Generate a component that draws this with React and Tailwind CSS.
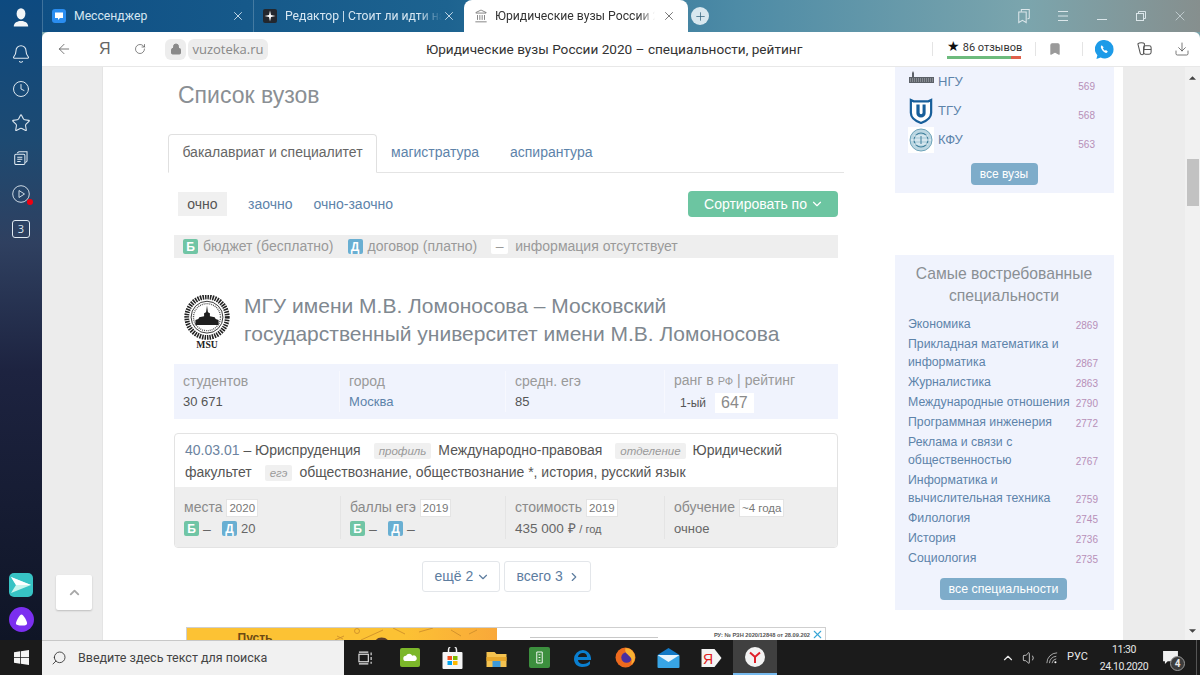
import React from "react";
import { ArrowLeft, Bell, Bookmark, ChevronDown, ChevronRight, ChevronUp, Clock, Download, Landmark, Lock, Plus, RotateCw, Search, Star, Volume1, X } from "lucide-react";

function Tab({ icon, title, fade }) {
  return (
    <div className="w-[211px] h-[32px] flex items-center shrink-0 border-l border-white/20 pl-[9px] pr-[8px] text-[#d5e6f2]">
      <div className="w-[14px] h-[14px] shrink-0 flex items-center justify-center">{icon}</div>
      <div className={"ml-[8px] w-[158px] text-[12.2px] whitespace-nowrap overflow-hidden " + (fade ? "[mask-image:linear-gradient(to_right,black_85%,transparent)]" : "")}>{title}</div>
      <X size={14} className="ml-auto shrink-0 text-[#d5e6f2]" strokeWidth={1.5} />
    </div>
  );
}

function Year({ children }) {
  return <span className="bg-white border border-[#e4e4e4] text-[#777] text-[11.5px] leading-[16px] px-[2px] ml-[4px] inline-block">{children}</span>;
}

function Tag({ children }) {
  return <span className="bg-[#f0f0f0] text-[#9a9a9a] italic text-[11.5px] leading-[14px] px-[5px] py-[2px] ml-[13px] mr-[7px] rounded-[2px]">{children}</span>;
}

function Badge({ color, children }) {
  return <span className={"inline-flex w-[15px] h-[15px] items-center justify-center rounded-[2px] text-white text-[12px] font-bold " + color}>{children}</span>;
}

function StatCell({ label, value, link, className }) {
  return (
    <div className={"pl-[9px] " + className}>
      <div className="text-[14px] leading-[20px] text-[#9a9a9a]">{label}</div>
      <div className={"mt-[1px] text-[13px] leading-[20px] " + (link ? "text-[#5d83aa]" : "text-[#555]")}>{value}</div>
    </div>
  );
}

const topUnis = [
  { name: "НГУ", score: 569, logo: <NguLogo /> },
  { name: "ТГУ", score: 568, logo: <TguLogo /> },
  { name: "КФУ", score: 563, logo: <KfuLogo /> },
];

const specialties = [
  ["Экономика", 2869],
  ["Прикладная математика и информатика", 2867],
  ["Журналистика", 2863],
  ["Международные отношения", 2790],
  ["Программная инженерия", 2772],
  ["Реклама и связи с общественностью", 2767],
  ["Информатика и вычислительная техника", 2759],
  ["Филология", 2745],
  ["История", 2736],
  ["Социология", 2735],
];

function NguLogo() {
  return (
    <svg viewBox="0 0 26 14" className="w-[26px] h-[14px] -mt-[8px]">
      <path d="M1 12V6h3V2l1-2 1 2v4h20v6z" fill="#5c6168" />
      <path d="M2 8h23M2 10h23" stroke="#d8dce2" strokeWidth="0.7" strokeDasharray="1 1" />
    </svg>
  );
}

function TguLogo() {
  return (
    <svg viewBox="0 0 26 28" className="w-[24px] h-[26px]">
      <path d="M2 2l3 1.5h16L24 2v14c0 6-5 9-11 11C7 25 2 22 2 16z" fill="#fff" stroke="#175e9a" strokeWidth="2.4" />
      <path d="M8 7h3.5v9a1.6 1.6 0 003.2 0V7H18v9.5c0 3-2.2 4.5-5 4.5s-5-1.5-5-4.5z" fill="#175e9a" />
    </svg>
  );
}

function KfuLogo() {
  return (
    <svg viewBox="0 0 26 26" className="w-[26px] h-[26px] bg-white">
      <circle cx="13" cy="13" r="11" fill="#bcd7e2" stroke="#6fa4ba" />
      <circle cx="13" cy="13" r="7" fill="none" stroke="#3f7f9b" strokeWidth="1.2" />
      <path d="M3 13h20M6 9h14M6 17h14" stroke="#eef6f9" strokeWidth="1.1" />
      <path d="M13 9v8" stroke="#3f7f9b" />
    </svg>
  );
}

function MsuLogo() {
  return (
    <svg viewBox="0 0 48 56" className="w-[48px] h-[54px] shrink-0">
      <circle cx="24" cy="23" r="21" fill="none" stroke="#222" strokeWidth="5" strokeDasharray="1.6 1" />
      <circle cx="24" cy="23" r="16.5" fill="none" stroke="#333" strokeWidth="1" />
      <circle cx="24" cy="23" r="14" fill="none" stroke="#555" strokeWidth="1.4" strokeDasharray="1 1" />
      <path d="M24 11l1 7 2 1v3l5 1 1 2 3 1v5H12v-5l3-1 1-2 5-1v-3l2-1z" fill="#1f1f1f" />
      <text x="24" y="55" textAnchor="middle" fontSize="10" fontWeight="bold" fontFamily="'Liberation Serif', serif" fill="#222">MSU</text>
    </svg>
  );
}

function RailIcons() {
  return (
    <div className="w-[42px] shrink-0 h-full flex flex-col items-center text-[#dfe9f1] bg-[linear-gradient(to_bottom,#0d4a80_0%,#1d4a72_22%,#2f4060_38%,#1d2340_58%,#0f1526_100%)]">
      <svg viewBox="0 0 20 24" className="w-[16px] h-[20px] mt-[7px]" fill="#f2f5f7">
        <ellipse cx="10" cy="8" rx="5.5" ry="7" />
        <path d="M1 24c0-5 4-6 7-7h4c3 1 7 2 7 7z" />
      </svg>
      <Bell size={20} strokeWidth={1.3} className="mt-[17px]" />
      <Clock size={18} strokeWidth={1.3} className="mt-[16px]" />
      <Star size={20} strokeWidth={1.3} className="mt-[15px]" />
      <svg viewBox="0 0 20 20" className="w-[17px] h-[17px] mt-[17px]" fill="none" stroke="currentColor" strokeWidth="1.2">
        <path d="M5 3.5 7 2h9.5v11l-2 2" />
        <rect x="2" y="5" width="12" height="12" rx="1.5" />
        <path d="M5 8.5h6M5 11h6M5 13.5h4" />
      </svg>
      <div className="relative mt-[18px]">
        <svg viewBox="0 0 18 18" className="w-[18px] h-[18px]" fill="none" stroke="currentColor" strokeWidth="0.9">
          <circle cx="9" cy="9" r="8.3" />
          <path d="M7 5.5 12.500 9 7 12.500z" />
        </svg>
        <span className="absolute -right-[3px] -bottom-[2px] w-[6px] h-[6px] rounded-full bg-[#f00010]" />
      </div>
      <div className="mt-[17px] w-[18px] h-[18px] border border-[#dfe9f1] rounded-[3px] flex items-center justify-center text-[11px] font-['Open_Sans',sans-serif]">3</div>
      <svg viewBox="0 0 24 24" className="w-[24px] h-[24px] mt-auto rounded-[5px]">
        <rect width="24" height="24" fill="#37c3c4" />
        <path d="M2 4l20 8-20 8 5-8z" fill="#c9f5ee" />
        <path d="M2 4l20 8H7z" fill="#fff" />
      </svg>
      <div className="w-[25px] h-[25px] rounded-full bg-[#7b2ff0] mt-[10px] mb-[8px] flex items-center justify-center">
        <svg viewBox="0 0 14 12" className="w-[13px] h-[12px]" fill="#fff">
          <path d="M7 0c2 0 6 7 6 9.500S10 12 7 12s-6-.5-6-2.500S5 0 7 0z" />
        </svg>
      </div>
    </div>
  );
}

function TabStrip() {
  return (
    <div className="h-[32px] flex items-center font-['Roboto',sans-serif] bg-[linear-gradient(to_right,#0f4f84_0%,#1d6390_35%,#4d8ba6_60%,#7ba5ad_85%,#868f8e_100%)]">
      <Tab
        title="Мессенджер"
        icon={
          <svg viewBox="0 0 14 14" className="w-[14px] h-[14px]">
            <rect width="14" height="14" rx="3" fill="#2a8df0" />
            <path d="M3 3.500h8v5.500H8l-2 2V9H3z" fill="#fff" />
          </svg>
        }
      />
      <Tab
        fade
        title="Редактор | Стоит ли идти на юриста"
        icon={
          <svg viewBox="0 0 14 14" className="w-[14px] h-[14px]">
            <rect width="14" height="14" rx="2" fill="#23272e" />
            <path d="M7 1.500 8 6l4.500 1L8 8l-1 4.500L6 8 1.500 7 6 6z" fill="#fff" />
          </svg>
        }
      />
      <div className="w-[224px] h-[32px] bg-white rounded-t-[8px] flex items-center pl-[10px] pr-[9px] text-[#333] shrink-0">
        <Landmark size={14} strokeWidth={1.2} className="text-[#555] shrink-0" />
        <div className="ml-[7px] w-[160px] text-[12.2px] whitespace-nowrap overflow-hidden [mask-image:linear-gradient(to_right,black_90%,transparent)]">Юридические вузы России 2020</div>
        <X size={14} strokeWidth={1.5} className="ml-auto mr-[3px] text-[#666]" />
      </div>
      <div className="ml-[3px] w-[18px] h-[18px] rounded-full bg-[#d9e8ef] flex items-center justify-center">
        <Plus size={13} strokeWidth={1.4} className="text-[#35647f]" />
      </div>
      <div className="ml-auto flex items-center text-[#dbe6ea]">
        <svg viewBox="0 0 16 18" className="w-[14px] h-[16px] mr-[26px]" fill="none" stroke="currentColor" strokeWidth="1.2">
          <path d="M5 4V1.500h9v10l-2 1" />
          <path d="M2 4.500h8.500v12L6.200 14 2 16.500z" />
        </svg>
        <svg viewBox="0 0 12 12" className="w-[12px] h-[12px] mr-[28px]" stroke="currentColor" strokeWidth="1">
          <path d="M1 1.500h10M1 6h10M1 10.500h10" />
        </svg>
        <div className="w-[10px] h-[1px] bg-[#dbe6ea] mt-[6px] mr-[29px]" />
        <svg viewBox="0 0 10 10" className="w-[10px] h-[10px] mr-[26px]" fill="none" stroke="currentColor" strokeWidth="1">
          <rect x="0.500" y="2.500" width="7" height="7" />
          <path d="M2.500 2.500v-2h7v7h-2" />
        </svg>
        <X size={16} strokeWidth={1} className="mr-[12px]" />
      </div>
    </div>
  );
}

function AddressBar() {
  return (
    <div className="h-[35px] bg-white rounded-tl-[6px] rounded-tr-[6px] border-b border-[#e8e8e8] flex items-center text-[#555] shrink-0">
      <ArrowLeft size={16} strokeWidth={1.2} className="ml-[14px] shrink-0" />
      <span className="ml-[27px] w-[10px] font-['Liberation_Sans',sans-serif] text-[16px] text-[#666]">Я</span>
      <RotateCw size={12} strokeWidth={1.4} className="ml-[25px] shrink-0" />
      <div className="ml-[19px] w-[21px] h-[21px] rounded-[6px] bg-[#ededed] flex items-center justify-center shrink-0">
        <Lock size={12} fill="#8a8a8a" className="text-[#8a8a8a]" />
      </div>
      <div className="ml-[2px] h-[21px] w-[80px] text-center rounded-[6px] bg-[#ededed] text-[13px] leading-[21px] text-[#888] font-['Open_Sans',sans-serif] shrink-0">vuzoteka.ru</div>
      <div className="ml-[158px] w-[379px] shrink-0 text-[13.6px] text-[#333] whitespace-nowrap font-['Roboto',sans-serif]">Юридические вузы России 2020 – специальности, рейтинг</div>
      <div className="ml-[127px] h-[14px] border-l border-[#e4e4e4]" />
      <div className="ml-[14px] w-[74px] shrink-0 flex flex-col">
        <div className="text-[11px] leading-[14px] text-[#333] whitespace-nowrap font-['Roboto',sans-serif]"><span className="text-[14px] text-[#111]">★</span> 86 отзывов</div>
        <div className="h-[3px] mt-[1px] flex">
          <div className="w-[64px] bg-[#6dbb7d]" />
          <div className="w-[10px] bg-[#e0604a]" />
        </div>
      </div>
      <div className="ml-[14px] h-[14px] border-l border-[#e4e4e4]" />
      <Bookmark size={14} fill="#9a9a9a" className="ml-[12px] shrink-0 text-[#9a9a9a]" />
      <div className="ml-[20px] h-[14px] border-l border-[#e4e4e4]" />
      <svg viewBox="0 0 20 20" className="ml-[12px] w-[19px] h-[19px] shrink-0">
        <path d="M10 0a9.500 9.500 0 019.500 9.500A9.500 9.500 0 016 18.500L1.500 20l1-4A9.500 9.500 0 0110 0z" fill="#1d9be8" />
        <path d="M7 5.500c-1.500 1-1 3 .5 5s3.500 3.500 5 3l1-1.500-2-1.500-1 .7c-1-.5-1.800-1.500-2.200-2.500l.8-1z" fill="#fff" />
      </svg>
      <svg viewBox="0 0 18 18" className="ml-[22px] w-[17px] h-[17px] shrink-0" fill="none" stroke="#555" strokeWidth="1.1">
        <path d="M2 3c1.500-1.500 6-1.500 7 0l-1 10c0 2-3 2-3.500 0z" />
        <rect x="8" y="5" width="8" height="9" rx="2" />
        <path d="M8 9h8" />
      </svg>
      <Download size={16} strokeWidth={1.2} className="ml-[21px] shrink-0" />
    </div>
  );
}

function UniversityCard() {
  return (
    <div className="ml-[6px] w-[664px]">
      <div className="flex items-center mt-[32px] h-[60px]">
        <div className="ml-[9px] mt-[3px] flex">
          <MsuLogo />
        </div>
        <h2 className="ml-[13px] w-[560px] text-[21px] leading-[28px] text-[#808890]">МГУ имени М.В. Ломоносова – Московский государственный университет имени М.В. Ломоносова</h2>
      </div>
      <div className="mt-[14px] h-[55px] bg-[#f0f3fd] grid grid-cols-[165px_166px_159px_174px] items-center">
        <StatCell label="студентов" value="30 671" />
        <StatCell label="город" value="Москва" link className="border-l border-[#f7f8fe]" />
        <StatCell label="средн. егэ" value="85" className="border-l border-[#f7f8fe]" />
        <div className="pl-[9px] border-l border-[#f7f8fe]">
          <div className="text-[14px] leading-[20px] text-[#9a9a9a]">ранг в <span className="text-[11px]">РФ</span> | рейтинг</div>
          <div className="text-[13px] leading-[20px] text-[#555] mt-[2px] flex items-center">
            <span className="ml-[6px] text-[12px]">1-ый</span>
            <span className="ml-[9px] bg-white px-[6px] text-[16px] text-[#8a8a8a]">647</span>
          </div>
        </div>
      </div>
      <div className="mt-[14px] border border-[#e3e3e3] rounded-[4px] overflow-hidden">
        <div className="h-[53px] pl-[10px] pr-[20px] pt-[5px] text-[14px] leading-[22px] text-[#555]">
          <span className="text-[#6c83a0]">40.03.01</span> – Юриспруденция<Tag>профиль</Tag>Международно-правовая<Tag>отделение</Tag>Юридический факультет<Tag>егэ</Tag>обществознание, обществознание *, история, русский язык
        </div>
        <div className="h-[60px] bg-[#eeeeee] grid grid-cols-[165px_165px_159px_173px] items-center">
          <div className="pl-[9px]">
            <div className="text-[14px] leading-[22px] text-[#8a8a8a]">места<Year>2020</Year></div>
            <div className="mt-[1px] text-[14px] leading-[20px] text-[#666] flex items-center"><Badge color="bg-[#70c5a5]">Б</Badge><span className="ml-[4px] w-[19px]">–</span><Badge color="bg-[#69afd2]">Д</Badge><span className="ml-[4px] text-[13px]">20</span></div>
          </div>
          <div className="pl-[9px] border-l border-[#e4e4e4]">
            <div className="text-[14px] leading-[22px] text-[#8a8a8a]">баллы егэ<Year>2019</Year></div>
            <div className="mt-[1px] text-[14px] leading-[20px] text-[#666] flex items-center"><Badge color="bg-[#70c5a5]">Б</Badge><span className="ml-[4px] w-[19px]">–</span><Badge color="bg-[#69afd2]">Д</Badge><span className="ml-[4px]">–</span></div>
          </div>
          <div className="pl-[9px] border-l border-[#e4e4e4]">
            <div className="text-[14px] leading-[22px] text-[#8a8a8a]">стоимость<Year>2019</Year></div>
            <div className="mt-[1px] text-[13.5px] leading-[20px] text-[#666]">435 000 ₽ <span className="text-[11px]">/ год</span></div>
          </div>
          <div className="pl-[9px] border-l border-[#e4e4e4]">
            <div className="text-[14px] leading-[22px] text-[#8a8a8a]">обучение<Year>~4 года</Year></div>
            <div className="mt-[1px] text-[13px] leading-[20px] text-[#666]">очное</div>
          </div>
        </div>
      </div>
      <div className="mt-[13px] flex justify-center gap-[4px]">
        <button className="h-[31px] w-[78px] border border-[#e3e6ea] rounded-[3px] text-[14px] text-[#5d7d9f] flex items-center pl-[12px] gap-[3px]">ещё 2 <ChevronDown size={14} /></button>
        <button className="h-[31px] w-[87px] border border-[#e3e6ea] rounded-[3px] text-[14px] text-[#5d7d9f] flex items-center pl-[12px] gap-[4px]">всего 3 <ChevronRight size={14} /></button>
      </div>
    </div>
  );
}

function Banner() {
  return (
    <div className="mt-[35px] ml-[18px] w-[640px] h-[40px] border border-[#cfcfcf] flex overflow-hidden shrink-0">
      <div className="w-[310px] h-full flex bg-[linear-gradient(to_right,#fcc234_0%,#fcc234_70%,#f9a83a_100%)]">
        <div className="w-[136px] shrink-0 text-center pt-[1px] text-[12px] font-bold text-[#6b4a14]">Пусть</div>
        <svg viewBox="0 0 174 14" className="w-[174px] h-[14px]" fill="none" stroke="#c98a2a" strokeWidth="0.8">
          <path d="M12 12l9-4M14 8l6 3M38 12 60 2M70 0l12 6M96 4l14-4M128 2l10 6M146 6l8-4" />
          <circle cx="34" cy="3" r="2.500" />
          <path d="M52 14c1-6 12-6 14 0z" fill="#5d3f2a" stroke="none" />
        </svg>
      </div>
      <div className="flex-1 bg-white flex items-start pr-[1px] text-[5.7px] font-bold leading-[10px] text-[#555] whitespace-nowrap">
        <div className="ml-[33px] mt-[9px] w-[128px] h-[1px] bg-[#c8c8c8] shrink-0" />
        <span className="ml-auto mt-[2px]">РУ: № РЗН 2020/12848 от 28.09.202</span>
        <X size={13} className="text-[#37a6d6] ml-[1px] shrink-0" />
      </div>
    </div>
  );
}

function MainColumn() {
  return (
    <div className="w-[676px] ml-[65px] shrink-0">
      <h1 className="ml-[10px] mt-[13px] text-[23px] leading-[30px] text-[#8a8f94]">Список вузов</h1>
      <div className="mt-[24px] h-[39px] flex items-end border-b border-[#e4e4e4] text-[14px] text-[#5d83aa]">
        <div className="h-[39px] w-[209px] -mb-[1px] pb-[2px] border border-[#e0e0e0] border-b-white rounded-t-[4px] flex items-center justify-center text-[#666] bg-white">бакалавриат и специалитет</div>
        <div className="h-[38px] pb-[2px] flex items-center ml-[14px]">магистратура</div>
        <div className="h-[38px] pb-[2px] flex items-center ml-[31px]">аспирантура</div>
      </div>
      <div className="ml-[10px] w-[660px] mt-[18px] flex items-center text-[14px] text-[#5d83aa]">
        <span className="h-[24px] w-[49px] bg-[#f0f0f0] text-[#555] flex items-center justify-center">очно</span>
        <span className="ml-[21px]">заочно</span>
        <span className="ml-[21px]">очно-заочно</span>
        <button className="ml-auto h-[26px] w-[150px] pl-[2px] rounded-[4px] bg-[#6cc5a1] text-white flex items-center justify-center gap-[3px]">Сортировать по <ChevronDown size={14} /></button>
      </div>
      <div className="ml-[6px] w-[664px] mt-[18px] h-[23px] bg-[#eeeeee] pl-[9px] flex items-center text-[14px] text-[#9a9a9a]">
        <Badge color="bg-[#70c5a5]">Б</Badge><span className="ml-[5px]">бюджет (бесплатно)</span>
        <span className="ml-[14px] flex"><Badge color="bg-[#69afd2]">Д</Badge></span><span className="ml-[5px]">договор (платно)</span>
        <span className="ml-[14px] w-[17px] h-[15px] bg-white rounded-[2px] flex items-center justify-center">–</span><span className="ml-[7px]">информация отсутствует</span>
      </div>
      <UniversityCard />
      <Banner />
    </div>
  );
}

function SideColumn() {
  return (
    <div className="w-[219px] ml-[51px] shrink-0 flex flex-col">
      <div className="h-[126px] bg-[#f0f3fd] pl-[13px] pr-[19px] flex flex-col">
        {topUnis.map((u) => (
          <div key={u.name} className="h-[29px] flex items-center text-[13px] text-[#5d83aa]">
            <div className="w-[26px] h-[26px] flex items-center justify-center shrink-0">{u.logo}</div>
            <span className="ml-[4px]">{u.name}</span>
            <span className="ml-auto mt-[10px] text-[10px] text-[#b78fb8]">{u.score}</span>
          </div>
        ))}
        <div className="mt-[7px] self-center ml-[5px]">
          <button className="h-[22px] w-[67px] rounded-[4px] bg-[#7eacca] text-white text-[12px]">все вузы</button>
        </div>
      </div>
      <div className="mt-[62px] bg-[#f0f3fd] h-[355px] pl-[13px] pr-[16px] pt-[8px] flex flex-col">
        <div className="ml-[2px] text-center text-[15.7px] leading-[22px] text-[#8a8f94]">Самые востребованные специальности</div>
        <div className="mt-[7px] flex flex-col">
          {specialties.map(([name, score]) => (
            <div key={name} className="flex items-end py-[1px] text-[12.3px] leading-[18px] text-[#5d83aa]">
              <span className="w-[165px]">{name}</span>
              <span className="ml-auto -mb-[2px] text-[10px] text-[#b78fb8]">{score}</span>
            </div>
          ))}
        </div>
        <div className="mt-[8px] self-center ml-[1px]">
          <button className="h-[22px] w-[127px] rounded-[4px] bg-[#7eacca] text-white text-[12.4px]">все специальности</button>
        </div>
      </div>
    </div>
  );
}

function PageArea() {
  return (
    <div className="flex-1 min-h-0 bg-[#ececec] flex relative overflow-hidden font-['Liberation_Sans',sans-serif]">
      <div className="w-[60px] shrink-0" />
      <div className="w-[1021px] bg-white flex shrink-0 h-full overflow-hidden border-l border-[#e4e4e4]">
        <MainColumn />
        <SideColumn />
      </div>
      <div className="ml-auto w-[15px] bg-[#f1f1f1] flex flex-col items-center">
        <svg viewBox="0 0 8 4" className="w-[7px] h-[4px] mt-[9px]" fill="#444"><path d="M4 0l4 4H0z" /></svg>
        <div className="w-[12px] h-[47px] bg-[#c2c2c2] mt-[79px]" />
        <svg viewBox="0 0 8 4" className="w-[7px] h-[4px] mt-auto mb-[7px]" fill="#444"><path d="M0 0h8L4 4z" /></svg>
      </div>
      <div className="absolute left-[14px] top-[508px] w-[36px] h-[35px] bg-white rounded-[2px] shadow-[0_1px_2px_rgba(0,0,0,0.2)] flex items-center justify-center">
        <ChevronUp size={15} strokeWidth={3} className="text-[#a8a8a8]" />
      </div>
    </div>
  );
}

function Taskbar() {
  return (
    <div className="h-[35px] shrink-0 bg-[#1b1b1b] flex items-center text-[#e8e8e8] font-['Roboto',sans-serif]">
      <div className="w-[42px] flex justify-center">
        <svg viewBox="0 0 16 16" className="w-[15px] h-[15px]" fill="#f4f4f4">
          <path d="M0 2.300 6.500 1.400V7.500H0zM7.300 1.300 16 0v7.500H7.300zM0 8.300h6.500v6.300L0 13.700zM7.300 8.300H16V16l-8.700-1.300z" />
        </svg>
      </div>
      <div className="w-[302px] h-[35px] bg-[#f1f1f1] border-t border-[#c8c8c8] flex items-center pl-[9px] text-[#444]">
        <Search size={16} strokeWidth={1.3} className="-scale-x-100 text-[#333]" />
        <span className="ml-[11px] text-[12.5px]">Введите здесь текст для поиска</span>
      </div>
      <svg viewBox="0 0 16 14" className="ml-[14px] w-[15px] h-[14px]" fill="none" stroke="#e8e8e8" strokeWidth="1.2">
        <rect x="1" y="3" width="10" height="8" />
        <path d="M1 0.700h10M1 13.300h10M14 1v3M14 6v3M14 11v2" />
      </svg>
      <div className="ml-[27px] w-[20px] h-[19px] rounded-[2px] bg-[#7cb72a] flex items-center justify-center">
        <svg viewBox="0 0 16 10" className="w-[15px] h-[9px]" fill="#fff"><path d="M3 9a3 3 0 010-6 4 4 0 017 0 3 3 0 013 6z" /></svg>
      </div>
      <svg viewBox="0 0 20 22" className="ml-[22px] w-[21px] h-[22px]">
        <path d="M6 6V3a4 4 0 018 0v3" fill="none" stroke="#f1f1f1" strokeWidth="1.5" />
        <rect y="5" width="20" height="17" rx="1" fill="#f5f5f5" />
        <rect x="5" y="9" width="4.500" height="4" fill="#f25022" />
        <rect x="10.500" y="9" width="4.500" height="4" fill="#7fba00" />
        <rect x="5" y="14" width="4.500" height="4" fill="#00a4ef" />
        <rect x="10.500" y="14" width="4.500" height="4" fill="#ffb900" />
      </svg>
      <svg viewBox="0 0 20 18" className="ml-[23px] w-[21px] h-[18px]">
        <path d="M0 3h8l2 2h10v13H0z" fill="#f4c24f" />
        <path d="M0 8h20v4H0z" fill="#e8a82c" />
        <rect x="6" y="12" width="8" height="6" fill="#3e9ad8" />
      </svg>
      <div className="ml-[22px] w-[21px] h-[21px] rounded-[2px] bg-[#3c8f3e] flex items-center justify-center">
        <svg viewBox="0 0 12 14" className="w-[11px] h-[13px]" fill="none" stroke="#fff" strokeWidth="1"><path d="M3 1h6v12H3zM5 4h2M5 7h2M5 10h2" /></svg>
      </div>
      <svg viewBox="0 0 20 20" className="ml-[23px] w-[20px] h-[20px]">
        <path d="M10 2a9 9 0 00-9 9c0 5 4 8 8 8 4 0 7-1 8-3v-3c-2 2-4 3-7 3-3 0-5-2-5-4h13v-2a9 9 0 00-8-8zM5 9c0-2 2-4 5-4s4 2 4 4z" fill="#0a7fd0" />
      </svg>
      <svg viewBox="0 0 20 20" className="ml-[22px] w-[21px] h-[21px]">
        <circle cx="10" cy="10" r="9.500" fill="#ed6a1e" />
        <circle cx="11" cy="10" r="5" fill="#4a2fa0" />
        <path d="M10 1c5 0 9 4 9 9 0 3-2 6-4 7 2-3 1-7-2-9-2-2-4-3-3-7z" fill="#f9b233" />
      </svg>
      <svg viewBox="0 0 22 20" className="ml-[21px] w-[23px] h-[20px]">
        <path d="M0 7 11 0l11 7z" fill="#1379c5" />
        <rect y="7" width="22" height="13" rx="1" fill="#38a5e6" />
        <path d="M0 7l11 7 11-7" fill="#e8f5fd" />
      </svg>
      <svg viewBox="0 0 20 20" className="ml-[21px] w-[21px] h-[20px]">
        <path d="M0 1h13l7 9-7 9H0z" fill="#f4f4f4" />
        <text x="6.500" y="15.500" textAnchor="middle" fontSize="14" fill="#e02020" fontFamily="'Liberation Sans', sans-serif">Я</text>
      </svg>
      <div className="ml-[11px] w-[44px] h-[35px] bg-[#404040] border-b-2 border-[#76b9ed] flex items-center justify-center">
        <div className="w-[20px] h-[20px] rounded-full bg-[#f2f2f2] flex items-center justify-center">
          <svg viewBox="0 0 12 12" className="w-[12px] h-[12px]" fill="none" stroke="#e0202a" strokeWidth="2"><path d="M1 1.500 6 6l5-4.500M6 6v6" /></svg>
        </div>
      </div>
      <div className="ml-auto flex items-center">
        <ChevronUp size={14} />
        <Volume1 size={16} strokeWidth={1.2} className="ml-[7px]" />
        <svg viewBox="0 0 14 14" className="ml-[8px] w-[12px] h-[12px]" fill="none" stroke="#cfcfcf" strokeWidth="0.9">
          <path d="M1 13A12 12 0 0113 1M4 13a9 9 0 018-8M7 13a6 6 0 015-5" />
          <circle cx="11" cy="12" r="1.200" fill="#fff" stroke="none" />
        </svg>
        <span className="ml-[9px] text-[11px]">РУС</span>
        <div className="ml-[10px] w-[52px] text-center text-[10.5px] tracking-[-0.4px] leading-[17px]">
          <div>11:30</div>
          <div className="whitespace-nowrap">24.10.2020</div>
        </div>
        <div className="ml-[13px] mr-[18px] relative">
          <svg viewBox="0 0 16 14" className="w-[15px] h-[13px]" fill="#f0f0f0"><path d="M0 0h16v11H5l-3 3v-3H0z" /></svg>
          <span className="absolute -right-[7px] top-[5px] w-[15px] h-[15px] rounded-full bg-[#3c3c3c] border border-[#999] text-[10px] font-bold flex items-center justify-center">4</span>
        </div>
        <div className="w-px h-[35px] bg-[#555] mr-[3px]" />
      </div>
    </div>
  );
}

export default function App() {
  return (
    <div className="w-[1200px] h-[675px] flex flex-col overflow-hidden">
      <div className="flex flex-1 min-h-0">
        <RailIcons />
        <div className="flex-1 min-w-0 flex flex-col font-['Open_Sans',sans-serif] bg-[#7ba5ad]">
          <TabStrip />
          <AddressBar />
          <PageArea />
        </div>
      </div>
      <Taskbar />
    </div>
  );
}
